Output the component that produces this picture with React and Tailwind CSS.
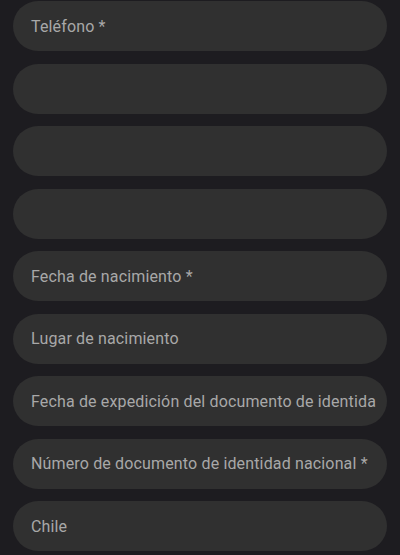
export default function App() {
  const fields = [
    "Teléfono *",
    "",
    "",
    "",
    "Fecha de nacimiento *",
    "Lugar de nacimiento",
    "Fecha de expedición del documento de identida",
    "Número de documento de identidad nacional *",
    "Chile",
  ];
  return (
    <div
      className="w-[400px] h-[555px] overflow-hidden bg-[#1d1c20] pt-[1px] px-[13px] flex flex-col gap-[12.5px]"
      style={{ fontFamily: "Roboto, 'Noto Sans', sans-serif" }}
    >
      {fields.map((t, i) => (
        <div
          key={i}
          className="h-[50px] shrink-0 rounded-full bg-[#303030] flex items-center pl-[18px] pr-[10px] overflow-hidden"
        >
          <span className="text-[16px] leading-[20px] tracking-[0.15px] text-[#a8a8a8] whitespace-nowrap pt-[1px]">
            {t}
          </span>
        </div>
      ))}
    </div>
  );
}
